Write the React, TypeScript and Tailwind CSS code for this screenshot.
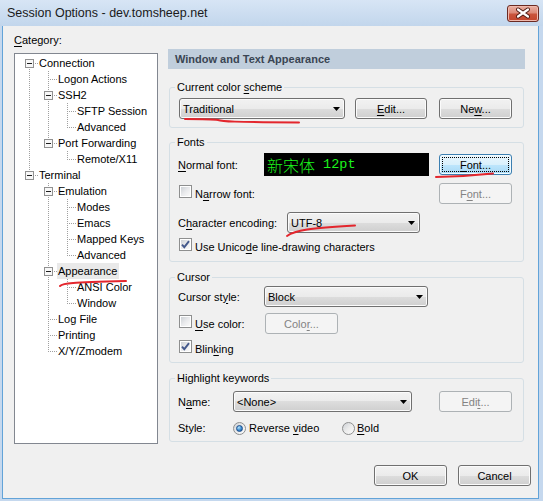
import React from 'react';

const FONT = "font-['Liberation_Sans',Arial,sans-serif]";

const U = ({ children }: { children: React.ReactNode }) => (
  <span className="underline decoration-1 underline-offset-[1.5px]">{children}</span>
);

type BtnProps = { children: React.ReactNode; w: string; disabled?: boolean; focused?: boolean; className?: string };

function Button({ children, w, disabled, focused, className = '' }: BtnProps) {
  const look = disabled
    ? 'border-[#adb2b5] bg-[#f4f4f4] text-[#838383]'
    : focused
      ? 'border-[#3c7fb1] bg-[linear-gradient(to_bottom,#eaf6fd_0%,#d9f0fc_50%,#bee6fd_50%,#a7d9f5_100%)] shadow-[inset_0_0_0_1px_#f2fbff]'
      : 'border-[#707070] bg-[linear-gradient(to_bottom,#f2f2f2_0%,#ebebeb_50%,#dddddd_50%,#cfcfcf_100%)] shadow-[inset_0_0_0_1px_#fbfbfb]';
  return (
    <div className={`relative flex h-[21px] shrink-0 items-center justify-center rounded-[3px] border ${look} ${w} ${className}`}>
      {focused && <span className="absolute inset-[2px] border border-dotted border-black" />}
      <span className="relative leading-[14px]">{children}</span>
    </div>
  );
}

function Combo({ text, w, className = '' }: { text: string; w: string; className?: string }) {
  return (
    <div
      className={`flex h-[21px] shrink-0 items-center rounded-[3px] border border-[#707070] bg-[linear-gradient(to_bottom,#f2f2f2_0%,#ebebeb_50%,#dddddd_50%,#cfcfcf_100%)] pl-[3px] pr-[4px] shadow-[inset_0_0_0_1px_#fbfbfb] ${w} ${className}`}
    >
      <span className="flex-1 whitespace-nowrap leading-[14px]">{text}</span>
      <svg width="7" height="4" viewBox="0 0 7 4" className="shrink-0">
        <path d="M0 0H7L3.5 4Z" fill="#000" />
      </svg>
    </div>
  );
}

function Checkbox({ checked }: { checked?: boolean }) {
  return (
    <span className="relative inline-block h-[13px] w-[13px] shrink-0 border border-[#8e8f8f] bg-white">
      <span className="absolute inset-[1px] bg-[linear-gradient(135deg,#cdd1d6_0%,#e9eaec_50%,#fafafa_100%)]" />
      {checked && (
        <svg className="absolute left-0 top-0" width="11" height="11" viewBox="0 0 11 11">
          <path d="M2 5.6 L4.3 8.2 L9 2.2" fill="none" stroke="#44598c" strokeWidth="1.9" />
        </svg>
      )}
    </span>
  );
}

function Radio({ checked }: { checked?: boolean }) {
  return (
    <span className="relative inline-block h-[13px] w-[13px] shrink-0 rounded-full border border-[#8e8f8f] bg-[linear-gradient(135deg,#cdd1d6_0%,#ececec_50%,#fcfcfc_100%)]">
      {checked && (
        <span className="absolute left-[2px] top-[2px] h-[7px] w-[7px] rounded-full border border-[#1b4c8a] bg-[radial-gradient(circle_at_35%_30%,#b5e4fb_0%,#3b8ad0_55%,#1a5597_100%)]" />
      )}
    </span>
  );
}

type Row = { label: string; anc: boolean[]; last: boolean; first?: boolean; exp?: boolean; sel?: boolean };

const rows: Row[] = [
  { label: 'Connection', anc: [], last: false, first: true, exp: true },
  { label: 'Logon Actions', anc: [true], last: false },
  { label: 'SSH2', anc: [true], last: false, exp: true },
  { label: 'SFTP Session', anc: [true, true], last: false },
  { label: 'Advanced', anc: [true, true], last: true },
  { label: 'Port Forwarding', anc: [true], last: true, exp: true },
  { label: 'Remote/X11', anc: [true, false], last: true },
  { label: 'Terminal', anc: [], last: true, exp: true },
  { label: 'Emulation', anc: [false], last: false, exp: true },
  { label: 'Modes', anc: [false, true], last: false },
  { label: 'Emacs', anc: [false, true], last: false },
  { label: 'Mapped Keys', anc: [false, true], last: false },
  { label: 'Advanced', anc: [false, true], last: true },
  { label: 'Appearance', anc: [false], last: false, exp: true, sel: true },
  { label: 'ANSI Color', anc: [false, true], last: false },
  { label: 'Window', anc: [false, true], last: true },
  { label: 'Log File', anc: [false], last: false },
  { label: 'Printing', anc: [false], last: false },
  { label: 'X/Y/Zmodem', anc: [false], last: true },
];

const DOT = '#a0a0a0';

function TreeRow({ r }: { r: Row }) {
  return (
    <div className="flex h-[16px]">
      {r.anc.map((a, i) => (
        <svg key={i} width={19} height={16} className="shrink-0">
          {a && <line x1={10.5} y1={0} x2={10.5} y2={16} stroke={DOT} strokeDasharray="1 1" />}
        </svg>
      ))}
      <svg width={19} height={16} className="shrink-0">
        {!r.first && <line x1={10.5} y1={0} x2={10.5} y2={8} stroke={DOT} strokeDasharray="1 1" />}
        {!r.last && <line x1={10.5} y1={8} x2={10.5} y2={16} stroke={DOT} strokeDasharray="1 1" />}
        <line x1={10} y1={8.5} x2={19} y2={8.5} stroke={DOT} strokeDasharray="1 1" />
        {r.exp && (
          <g>
            <rect x={6.5} y={4.5} width={8} height={8} fill="#f7f7f7" stroke="#919191" />
            <line x1={8} y1={8.5} x2={13} y2={8.5} stroke="#1e1e1e" />
          </g>
        )}
      </svg>
      <span className={`h-[16px] whitespace-nowrap pl-[1px] pr-[2px] leading-[16px] ${r.sel ? 'bg-[#e9e9e9]' : ''}`}>
        {r.label}
      </span>
    </div>
  );
}

function Group({ legend, className = '', children }: { legend: React.ReactNode; className?: string; children: React.ReactNode }) {
  return (
    <fieldset className={`mx-[1px] rounded-[3px] border border-[#d5dfe5] ${className}`}>
      <legend className="ml-[5px] px-[2px] leading-[14px]">{legend}</legend>
      {children}
    </fieldset>
  );
}

function CloseBtn() {
  return (
    <div className="ml-auto mr-[4px] mt-[5px] h-[17px] w-[32px] rounded-[3px] border border-[#6b2a22] bg-[linear-gradient(to_bottom,#eab0a3_0%,#dc8a78_45%,#c9543c_55%,#c4452c_100%)] shadow-[inset_0_0_0_1px_#f0b9ad]">
      <svg width="30" height="15" viewBox="0 0 30 15">
        <path d="M10 3.5 L20 10.5 M20 3.5 L10 10.5" stroke="#4a1710" strokeWidth="4" strokeLinecap="round" />
        <path d="M10 3.5 L20 10.5 M20 3.5 L10 10.5" stroke="#ffffff" strokeWidth="2.2" strokeLinecap="round" />
      </svg>
    </div>
  );
}

export default function App() {
  return (
    <div className={`relative h-[501px] w-[543px] overflow-hidden bg-[#c5d8ee] text-[11px] text-black ${FONT}`}>
      {/* Title bar */}
      <div className="flex h-[26px] items-start bg-[linear-gradient(to_bottom,#d7e5f5,#c2d6ec)]">
        <span className="ml-[7px] mt-[5px] text-[12.5px] leading-[17px] text-[#1a1a1a]">
          Session Options - dev.tomsheep.net
        </span>
        <CloseBtn />
      </div>

      {/* Client area */}
      <div className="ml-[2px] flex h-[473px] w-[537px] flex-col border-x border-b border-[#62a3d8] bg-[#f0f0f0]">
        <div className="flex items-start">
          {/* Left column */}
          <div className="ml-[11px] mt-[7px] flex w-[144px] flex-col">
            <div className="h-[14px] leading-[14px]">
              <U>C</U>ategory:
            </div>
            <div className="mt-[6px] h-[391px] border border-[#828790] bg-white pl-[4px] pt-[1px]">
              {rows.map((r, i) => (
                <TreeRow key={i} r={r} />
              ))}
            </div>
          </div>

          {/* Right column */}
          <div className="ml-[10px] mt-[23px] w-[357px]">
            <div className="h-[20px] bg-[#c0cedc] pl-[7px] font-bold leading-[20px] text-[#3a4553]">
              Window and Text Appearance
            </div>

            <Group legend={<>Current color <U>s</U>cheme</>} className="mt-[11px]">
              <div className="flex items-center pb-[8px] pl-[8px] pr-[11px] pt-[4px]">
                <Combo text="Traditional" w="w-[166px]" className="ml-[1px]" />
                <Button w="w-[72px]" className="ml-[10px]">
                  <U>E</U>dit...
                </Button>
                <Button w="w-[73px]" className="ml-auto">
                  Ne<U>w</U>...
                </Button>
              </div>
            </Group>

            <Group legend="Fonts" className="mt-[7px]">
              <div className="flex flex-col pb-[7px] pl-[8px] pr-[11px] pt-[4px]">
                <div className="flex h-[23px] items-center">
                  <span className="w-[86px] leading-[14px]">
                    <U>N</U>ormal font:
                  </span>
                  <div className="flex h-[23px] w-[165px] items-center bg-black pl-[3px] text-[#1cf51c]">
                    <span className="font-['Noto_Sans_CJK_SC',sans-serif] text-[16px] font-light leading-[18px]">新宋体</span>
                    <span className="font-['Liberation_Mono',monospace] text-[13.5px] leading-[18px]">&nbsp;12pt</span>
                  </div>
                  <Button w="w-[73px]" focused className="ml-auto">
                    <U>F</U>ont...
                  </Button>
                </div>
                <div className="mt-[7px] flex h-[21px] items-center">
                  <span className="ml-[1px]">
                    <Checkbox />
                  </span>
                  <span className="ml-[3px] leading-[14px]">
                    N<U>a</U>rrow font:
                  </span>
                  <Button w="w-[73px]" disabled className="ml-auto">
                    F<U>o</U>nt...
                  </Button>
                </div>
                <div className="mt-[8px] flex h-[21px] items-center">
                  <span className="w-[109px] leading-[14px]">
                    C<U>h</U>aracter encoding:
                  </span>
                  <Combo text="UTF-8" w="w-[133px]" />
                </div>
                <div className="mt-[7px] flex h-[14px] items-center">
                  <span className="ml-[1px]">
                    <Checkbox checked />
                  </span>
                  <span className="ml-[3px] leading-[14px]">
                    Use Unico<U>d</U>e line-drawing characters
                  </span>
                </div>
              </div>
            </Group>

            <Group legend="Cursor" className="mt-[8px]">
              <div className="flex flex-col pb-[6px] pl-[8px] pr-[11px] pt-[2px]">
                <div className="flex h-[21px] items-center">
                  <span className="w-[86px] leading-[14px]">
                    Cursor st<U>y</U>le:
                  </span>
                  <Combo text="Block" w="w-[164px]" />
                </div>
                <div className="mt-[6px] flex h-[21px] items-center">
                  <span className="flex w-[87px] items-center">
                    <span className="ml-[1px]">
                      <Checkbox />
                    </span>
                    <span className="ml-[3px] leading-[14px]">
                      <U>U</U>se color:
                    </span>
                  </span>
                  <Button w="w-[73px]" disabled>
                    Colo<U>r</U>...
                  </Button>
                </div>
                <div className="mt-[8px] flex h-[14px] items-center">
                  <span className="ml-[1px]">
                    <Checkbox checked />
                  </span>
                  <span className="ml-[3px] leading-[14px]">
                    Blin<U>k</U>ing
                  </span>
                </div>
              </div>
            </Group>

            <Group legend="Highlight keywords" className="mt-[8px]">
              <div className="flex flex-col pb-[6px] pl-[8px] pr-[11px] pt-[6px]">
                <div className="flex h-[21px] items-center">
                  <span className="w-[55px] leading-[14px]">
                    N<U>a</U>me:
                  </span>
                  <Combo text="<None>" w="w-[179px]" />
                  <Button w="w-[73px]" disabled className="ml-auto">
                    Edi<U>t</U>...
                  </Button>
                </div>
                <div className="mt-[9px] flex h-[14px] items-center">
                  <span className="w-[55px] leading-[14px]">Style:</span>
                  <span className="flex w-[109px] items-center">
                    <Radio checked />
                    <span className="ml-[3px] leading-[14px]">
                      Reverse <U>v</U>ideo
                    </span>
                  </span>
                  <Radio />
                  <span className="ml-[2px] leading-[14px]">
                    <U>B</U>old
                  </span>
                </div>
              </div>
            </Group>
          </div>
        </div>

        {/* Bottom buttons */}
        <div className="mt-[21px] flex justify-end gap-[11px] pr-[7px]">
          <Button w="w-[73px]">OK</Button>
          <Button w="w-[73px]">Cancel</Button>
        </div>
      </div>

      {/* Hand-drawn red annotation marks */}
      <svg className="pointer-events-none absolute left-0 top-0" width="543" height="501">
        <g fill="none" stroke="#e3262d" strokeWidth="2" strokeLinecap="round">
          <path d="M185 119 C200 119 212 119 218 120 C222 121.5 232 122 299 122.5" />
          <path d="M436 177 Q465 176.5 493 173.5" />
          <path d="M287 236 C295 230 310 228 355 225.5" />
          <path d="M60 286 C63 283 70 282.5 126 281" />
        </g>
      </svg>
    </div>
  );
}
